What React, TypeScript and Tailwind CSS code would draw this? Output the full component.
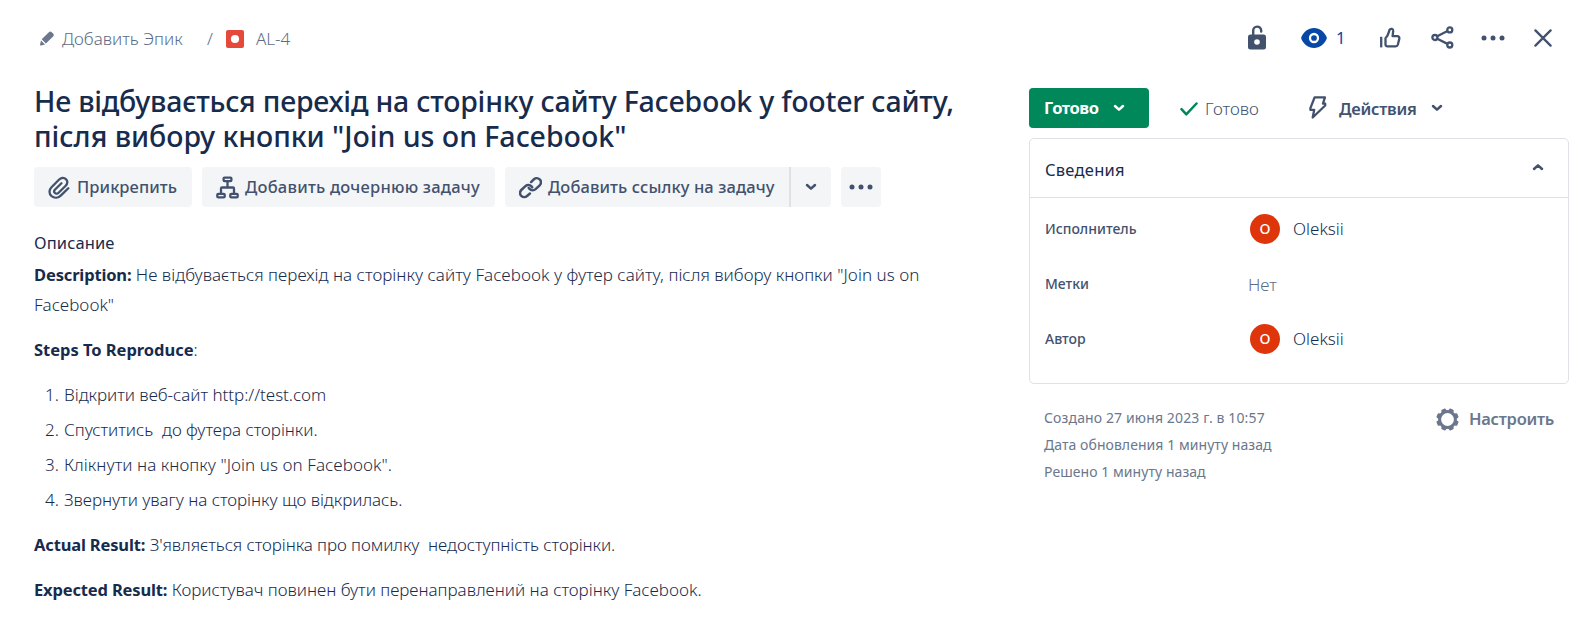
import type { ReactNode } from "react";

const Chevron = ({ up = false, className = "" }: { up?: boolean; className?: string }) => (
  <svg width="12" height="8" viewBox="0 0 12 8" fill="none" className={className}>
    <path d={up ? "M2 6 6 2.3 10 6" : "M2 2 6 5.7 10 2"} stroke="currentColor" strokeWidth="2.5" strokeLinecap="round" strokeLinejoin="round" />
  </svg>
);

const Dots = () => (
  <svg width="24" height="6" viewBox="0 0 24 6" fill="currentColor">
    <circle cx="3" cy="3" r="2.5" />
    <circle cx="12" cy="3" r="2.5" />
    <circle cx="21" cy="3" r="2.5" />
  </svg>
);

const Pencil = () => (
  <svg width="14" height="15" viewBox="0 0 14 15" fill="currentColor">
    <path d="M1.7 8.3 8.9 1.2a2 2 0 0 1 2.8 0l1.4 1.4a2 2 0 0 1 0 2.8L5.900 12.500zM1 9.500l4 3.900-3.900 1.100a.8.8 0 0 1-1-1z" />
  </svg>
);

const Bug = () => (
  <svg width="18" height="18" viewBox="0 0 18 18">
    <rect width="18" height="18" rx="2" fill="#e5493a" />
    <circle cx="9" cy="9" r="4.1" fill="#fff" />
  </svg>
);

const Lock = () => (
  <svg width="18" height="25" viewBox="0 0 18 25" fill="none">
    <path d="M5.2 11V5.7a4 4 0 0 1 8-.2v1" stroke="currentColor" strokeWidth="2.4" strokeLinecap="round" />
    <path fillRule="evenodd" fill="currentColor" d="M2.5 9.5h13A2.5 2.5 0 0 1 18 12v10a2.5 2.5 0 0 1-2.5 2.5h-13A2.5 2.5 0 0 1 0 22V12a2.5 2.5 0 0 1 2.5-2.5zM9 14.2a2.8 2.8 0 1 0 0 5.6 2.8 2.8 0 0 0 0-5.6z" />
  </svg>
);

const Eye = () => (
  <svg width="26" height="20" viewBox="0 0 26 20">
    <path d="M13 0C7 0 3 3.700 .6 8.500q-.8 1.500 0 3C3 16.300 7 20 13 20s10-3.700 12.400-8.500q.8-1.500 0-3C23 3.700 19 0 13 0z" fill="currentColor" />
    <circle cx="13" cy="10" r="4" fill="none" stroke="#fff" strokeWidth="2.300" />
  </svg>
);

const Thumb = () => (
  <svg width="21" height="21" viewBox="0 0 21 21" fill="none" stroke="currentColor" strokeWidth="2.300" strokeLinejoin="round" strokeLinecap="round">
    <path d="M1.200 9.800v10.600" strokeLinecap="butt" />
    <path d="M5.500 11.200v6.100a2 2 0 0 0 2 2h8.200a2.200 2.200 0 0 0 2.100-1.600l1.500-5.800a2.100 2.100 0 0 0-2-2.700h-4.700l.6-5.300a2 2 0 0 0-3.700-1.100C8.600 5.600 8.700 8 5.500 11.200z" />
  </svg>
);

const Share = () => (
  <svg width="23" height="23" viewBox="0 0 23 23" fill="none" stroke="currentColor" strokeWidth="2.300">
    <circle cx="3.900" cy="11.500" r="2.500" />
    <circle cx="18.800" cy="3.900" r="2.500" />
    <circle cx="18.800" cy="19" r="2.500" />
    <path d="M6.200 10.300 16.500 5M6.200 12.700 16.500 17.900" />
  </svg>
);

const Close = () => (
  <svg width="18" height="18" viewBox="0 0 18 18" fill="none" stroke="currentColor" strokeWidth="2.300" strokeLinecap="round">
    <path d="M1.400 1.400 16.600 16.600M16.600 1.400 1.400 16.600" />
  </svg>
);

const Clip = () => (
  <svg width="22" height="23" viewBox="0 0 22 23" fill="none" stroke="currentColor" strokeWidth="2.300" strokeLinecap="round">
    <path d="M20.300 12.300 13 19.400c-2.600 2.600-6.500 3.200-9.400.8-3-2.600-2.600-6.500-.1-9l7.400-7.500c2-2 5-2.500 7-.6 2.100 1.900 1.700 4.700-.2 6.600l-7.100 7c-1.200 1.200-2.700 1.300-3.700.3s-.9-2.400.2-3.500l6.300-6.200" />
  </svg>
);

const Tree = () => (
  <svg width="23" height="23" viewBox="0 0 23 23" fill="none" stroke="currentColor" strokeWidth="2.300" strokeLinejoin="round">
    <rect x="7.600" y="1.600" width="7.800" height="3.600" rx="1" />
    <rect x="1.300" y="17.800" width="7.400" height="3.600" rx="1" />
    <rect x="14.300" y="17.800" width="7.400" height="3.600" rx="1" />
    <path d="M11.500 5.200v6.300M5 17.500v-5a1 1 0 0 1 1-1h11a1 1 0 0 1 1 1v5" />
  </svg>
);

const LinkIcon = () => (
  <svg width="23" height="23" viewBox="0 0 24 24" fill="none" stroke="currentColor" strokeWidth="2.600" strokeLinecap="round">
    <path d="M12.600 6.300l3-2.900a4.400 4.400 0 0 1 6 .1 4.300 4.300 0 0 1 0 6.200l-4.300 4a4.600 4.600 0 0 1-6.300-.2l-.8-1" />
    <path d="M11.400 18.300l-3 2.600a4.400 4.400 0 0 1-6-.1 4.300 4.300 0 0 1 0-6.200l4.300-4a4.600 4.600 0 0 1 6.300.2l.8 1" />
  </svg>
);

const Bolt = () => (
  <svg width="18" height="23" viewBox="0 0 18 23" fill="none" stroke="currentColor" strokeWidth="2.300" strokeLinejoin="round">
    <path d="M5.600 1.300h10.300l-1.900 6.400h2.200v1.800L3.700 21.500l1.500-7.600H1.400v-1.700z" />
  </svg>
);

const Check = () => (
  <svg width="18" height="14" viewBox="0 0 18 14" fill="none" stroke="#00875a" strokeWidth="2.500" strokeLinecap="round" strokeLinejoin="round">
    <path d="M1.500 7.200 6.300 12.300 16.500 1.500" />
  </svg>
);

const Gear = () => (
  <svg width="23" height="23" viewBox="-11.500 -11.500 23 23" fill="none" stroke="currentColor">
    <circle r="7.900" strokeWidth="3" />
    {[22.5, 67.5, 112.5, 157.5, 202.5, 247.5, 292.5, 337.5].map((a) => (
      <path key={a} transform={`rotate(${a})`} d="M-1.900-8.500-1.500-10.300H1.500L1.900-8.500z" strokeWidth="1.800" strokeLinejoin="round" fill="currentColor" />
    ))}
  </svg>
);

const Avatar = () => (
  <span className="mr-[13px] ml-[3px] flex size-[30px] items-center justify-center rounded-full bg-[#de350b] text-[14px] font-medium text-white">O</span>
);

const Field = ({ label, children }: { label: string; children: ReactNode }) => (
  <div className="flex h-[55px] items-center">
    <div className="w-[202px] text-[14px] leading-5 font-medium text-[#42526e]">{label}</div>
    <div className="flex items-center text-[17px]">{children}</div>
  </div>
);

const steps: [string, string][] = [
  ["Відкрити веб-сайт http://test.com", "tracking-[-0.03px]"],
  ["Спуститись  до футера сторінки.", "tracking-[-0.03px]"],
  ['Клікнути на кнопку "Join us on Facebook".', "tracking-[0.06px]"],
  ["Звернути увагу на сторінку що відкрилась.", "tracking-[-0.04px]"],
];

export default function App() {
  return (
    <div className="h-[630px] w-[1575px] overflow-hidden bg-white font-['Noto_Sans',sans-serif] text-[16.5px] leading-[30px] text-[#172b4d]">
      <header className="flex h-[77px] items-center justify-between pr-[23px] pl-[40px]">
        <nav className="flex items-center text-[17px] font-light text-[#5e6c84]">
          <span className="text-[#6b778c]"><Pencil /></span>
          <span className="ml-[8px] w-[145px]">Добавить Эпик</span>
          <span className="w-[19px]">/</span>
          <Bug />
          <span className="ml-[12px]">AL-4</span>
        </nav>
        <div className="flex items-center pb-[2px] text-[#42526e]">
          <span className="w-[53px] pb-px"><Lock /></span>
          <span className="flex w-[79px] items-center text-[#0747a6]"><Eye /><span className="ml-[9px]">1</span></span>
          <span className="w-[51px]"><Thumb /></span>
          <span className="w-[50px]"><Share /></span>
          <span className="w-[53px]"><Dots /></span>
          <Close />
        </div>
      </header>

      <div className="flex">
        <main className="w-[1029px] pt-[7px] pl-[34px]">
          <h1 className="text-[28.5px] leading-[35px] font-medium whitespace-nowrap">
            <span className="block tracking-[-0.225px]">Не відбувається перехід на сторінку сайту Facebook у footer сайту,</span>
            <span className="block tracking-[-0.035px]">після вибору кнопки "Join us on Facebook"</span>
          </h1>

          <div className="mt-[13px] flex h-[40px] gap-[10px] font-medium whitespace-nowrap text-[#42526e]">
            <button className="flex w-[158px] items-center rounded-[4px] bg-[#f4f5f7] pl-[14px]">
              <Clip /><span className="ml-[7px] tracking-[0.07px]">Прикрепить</span>
            </button>
            <button className="flex w-[293px] items-center rounded-[4px] bg-[#f4f5f7] pl-[13.500px]">
              <Tree /><span className="ml-[6.500px] tracking-[0.23px]">Добавить дочернюю задачу</span>
            </button>
            <div className="flex w-[326px] rounded-[4px] bg-[#f4f5f7]">
              <button className="flex w-[286px] items-center border-r-2 border-[#dfe1e6] pl-[14px]">
                <LinkIcon /><span className="ml-[6px] tracking-[0.1px]">Добавить ссылку на задачу</span>
              </button>
              <button className="flex flex-1 items-center justify-center"><Chevron /></button>
            </div>
            <button className="flex w-[40px] items-center justify-center rounded-[4px] bg-[#f4f5f7]"><Dots /></button>
          </div>

          <h2 className="mt-[24px] h-[24px] leading-[24px] tracking-[0.12px]">Описание</h2>
          <div className="mt-[5px] text-[17px] font-light">
            <p className="whitespace-nowrap">
              <b className="text-[16.5px] font-bold tracking-[-0.15px]">Description:</b>{" "}
              <span className="tracking-[0.035px]">Не відбувається перехід на сторінку сайту Facebook у футер сайту, після вибору кнопки "Join us on</span>
              <br />Facebook"
            </p>
            <p className="mt-[15px]"><b className="text-[16.5px] font-bold tracking-[-0.03px]">Steps To Reproduce</b>:</p>
            <ol className="mt-[15px] flex flex-col gap-[5px]">
              {steps.map(([text, tracking], i) => (
                <li key={i} className="flex whitespace-pre">
                  <span className="w-[30px] pl-[11px]">{i + 1}.</span>
                  <span className={tracking}>{text}</span>
                </li>
              ))}
            </ol>
            <p className="mt-[15px] whitespace-pre"><b className="text-[16.5px] font-bold tracking-[-0.15px]">Actual Result:</b> <span className="tracking-[-0.06px]">З'являється сторінка про помилку  недоступність сторінки.</span></p>
            <p className="mt-[15px] whitespace-pre"><b className="text-[16.5px] font-bold tracking-[-0.15px]">Expected Result:</b> <span className="tracking-[-0.01px]">Користувач повинен бути перенаправлений на сторінку Facebook.</span></p>
          </div>
        </main>

        <aside className="w-[540px] pt-[11px]">
          <div className="flex h-[40px] items-center">
            <button className="flex h-[40px] w-[120px] items-center rounded-[4px] bg-[#00875a] pl-[15px] font-bold text-white">
              <span className="w-[69px] text-left tracking-[-0.45px]">Готово</span><Chevron />
            </button>
            <div className="ml-[31px] flex w-[129px] items-center pt-[2px] text-[17px] font-light text-[#42526e]">
              <Check /><span className="ml-[7px]">Готово</span>
            </div>
            <button className="flex items-center font-semibold text-[#42526e]">
              <span className="pb-px"><Bolt /></span><span className="ml-[12px] w-[92px] pt-px text-left tracking-[-0.25px]">Действия</span><Chevron />
            </button>
          </div>

          <section className="mt-[10px] h-[246px] rounded-[5px] border border-[#dfe1e6]">
            <div className="flex h-[59px] items-center justify-between border-b border-[#dfe1e6] pt-[3px] pr-[24px] pl-[15px]">
              <span className="tracking-[0.25px]">Сведения</span>
              <span className="pb-[5px] text-[#42526e]"><Chevron up /></span>
            </div>
            <div className="pt-[3px] pl-[15px] font-light">
              <Field label="Исполнитель"><Avatar />Oleksii</Field>
              <Field label="Метки"><span className="pt-[2px] pl-px text-[#5e6c84]">Нет</span></Field>
              <Field label="Автор"><Avatar />Oleksii</Field>
            </div>
          </section>

          <div className="mt-[20px] flex justify-between pr-[15px] pl-[15px] text-[#6b778c]">
            <div className="text-[14px] leading-[27px]">
              <p className="tracking-[0.13px]">Создано 27 июня 2023 г. в 10:57</p>
              <p className="tracking-[0.06px]">Дата обновления 1 минуту назад</p>
              <p className="tracking-[0.06px]">Решено 1 минуту назад</p>
            </div>
            <button className="flex h-[30px] items-center font-semibold">
              <Gear /><span className="ml-[10px] tracking-[-0.27px]">Настроить</span>
            </button>
          </div>
        </aside>
      </div>
    </div>
  );
}
